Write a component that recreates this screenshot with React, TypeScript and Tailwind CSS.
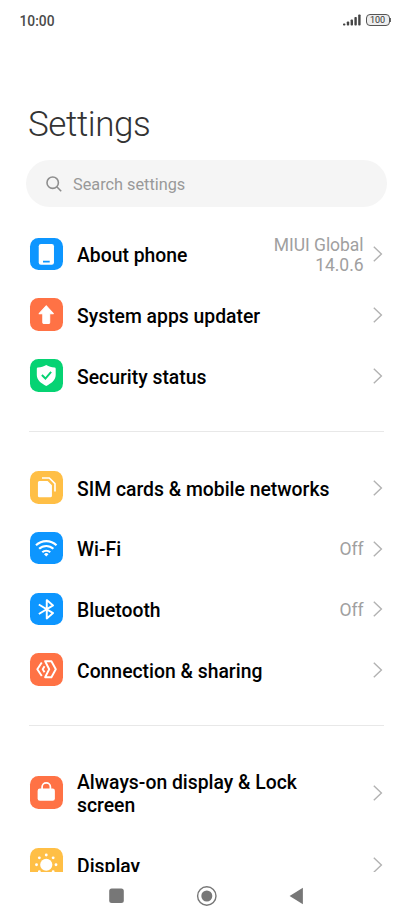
import type { ReactNode } from 'react';

interface SettingRowProps {
  icon: ReactNode;
  color: string;
  label: string;
  value?: string;
  tall?: boolean;
}

function Chevron() {
  return (
    <svg width="10" height="16" viewBox="0 0 10 16" fill="none" stroke="#b2b2b2" strokeWidth="1.4">
      <path d="M.8.8 8.4 8 .8 15.2" />
    </svg>
  );
}

function SettingRow({ icon, color, label, value, tall = false }: SettingRowProps) {
  return (
    <button
      type="button"
      className={`flex w-full items-center pr-[30.5px] pl-[30px] text-left ${tall ? 'h-[83px]' : 'h-[60.8px]'}`}
    >
      <span className={`h-[32.5px] w-[32.5px] shrink-0 overflow-hidden rounded-[8.5px] ${color}`}>
        <svg viewBox="0 0 32 32" className="h-full w-full" fill="none">
          {icon}
        </svg>
      </span>
      <span className="mt-[3.6px] ml-[14.5px] w-[260px] shrink-0 text-[19.35px] leading-[23px] font-medium text-black">
        {label}
      </span>
      <span className="mt-0.5 -ml-20 flex-1 text-right text-[17.5px] leading-[20px] tracking-[-0.05px] whitespace-pre-line text-[#a0a0a0]">
        {value}
      </span>
      <span className="mt-px ml-[9px] shrink-0">
        <Chevron />
      </span>
    </button>
  );
}

function Divider() {
  return <div className="mx-[29px] my-[25px] h-px bg-[#e8e8e8]" />;
}

const phoneIcon = (
  <>
    <rect x="8.6" y="6" width="15" height="20.3" rx="2.2" fill="#fff" />
    <path d="M12.8 23.3h6.6" stroke="#0d96ff" strokeWidth="1.7" />
  </>
);

const updateIcon = (
  <path
    d="M16 7.6 23 15.4H19.4V24.2a.9.9 0 0 1-.9.9H13.5a.9.9 0 0 1-.9-.9V15.4H9Z"
    fill="#fff"
    stroke="#fff"
    strokeLinejoin="round"
  />
);

const shieldIcon = (
  <>
    <path
      d="M16 5.8c2.6 1.5 5 2.3 8.2 2.5q1.1.1 1.1 1.2v6.3c0 4.8-4.3 8.4-9.3 10.7-5-2.3-9.3-5.9-9.3-10.7V9.5q0-1.1 1.1-1.2C11 8.1 13.4 7.3 16 5.8Z"
      fill="#fff"
    />
    <path d="m11.7 15.7 3.5 3.5 5.6-6.6" stroke="#06d373" strokeWidth="1.9" />
  </>
);

const simIcon = (
  <>
    <path
      d="M9.3 9.8H17.3L21.6 14.1v10.2a1.5 1.5 0 0 1-1.5 1.5H9.3a1.5 1.5 0 0 1-1.5-1.5V11.3a1.5 1.5 0 0 1 1.5-1.5Z"
      fill="#fff"
    />
    <path d="M11.8 6.9h7.2l5.6 5.6v7.8" stroke="#fff" strokeWidth="1.6" strokeLinejoin="round" />
  </>
);

const wifiIcon = (
  <>
    <g stroke="#fff" strokeWidth="2.1">
      <path d="M5.9 13.1a14.3 14.3 0 0 1 20.2 0" />
      <path d="M9 16.6a10 10 0 0 1 14 0" />
      <path d="M12.1 20a5.6 5.6 0 0 1 7.8 0" />
    </g>
    <path d="M13.8 21.9a3.1 3.1 0 0 1 4.4 0L16 24.2Z" fill="#fff" />
  </>
);

const bluetoothIcon = (
  <path
    d="m8.7 11.3 14 8.5-6.2 5.2V7l6.2 5.2-14 8.5"
    stroke="#fff"
    strokeWidth="1.9"
    strokeLinejoin="round"
  />
);

const sharingIcon = (
  <g stroke="#fff" strokeWidth="1.9" strokeLinejoin="round">
    <path d="M11.6 9.3 7.2 16l4.4 6.7" />
    <path d="m14.3 13-1.8 3 1.8 3" />
    <path d="M14.9 8.1h6.2L25.4 16l-4.3 7.9h-6.2l4-7.9Z" />
  </g>
);

const lockIcon = (
  <>
    <rect x="7.5" y="12.4" width="17" height="12" rx="2.2" fill="#fff" />
    <path d="M11.9 13v-2.2a4.1 4.1 0 0 1 8.2 0V13" stroke="#fff" strokeWidth="1.7" />
  </>
);

const sunIcon = (
  <g fill="#fff">
    <circle cx="16" cy="16.5" r="6" />
    <circle cx="16" cy="6.9" r="1.4" />
    <circle cx="9.2" cy="9.7" r="1.4" />
    <circle cx="22.8" cy="9.7" r="1.4" />
    <circle cx="6.4" cy="16.5" r="1.4" />
    <circle cx="25.6" cy="16.5" r="1.4" />
    <circle cx="9.2" cy="23.3" r="1.4" />
    <circle cx="22.8" cy="23.3" r="1.4" />
  </g>
);

function StatusBar() {
  return (
    <div className="flex h-[40px] shrink-0 items-center justify-between pr-[22px] pl-[19.5px]">
      <span className="mt-0.5 text-[13.8px] font-medium text-[#4a4a4a]">10:00</span>
      <div className="flex items-center gap-[5px]">
        <svg width="18" height="12" viewBox="0 0 18 12" fill="#444">
          <rect x="0" y="9.5" width="2.4" height="2" rx=".8" />
          <rect x="3.8" y="7.5" width="2.4" height="4" rx=".8" />
          <rect x="7.6" y="5.5" width="2.4" height="6" rx=".8" />
          <rect x="11.4" y="3" width="2.4" height="8.5" rx=".8" />
          <rect x="15.2" y=".5" width="2.4" height="11" rx=".8" />
        </svg>
        <div className="flex items-center">
          <div className="flex h-[12px] w-[24px] items-center justify-center rounded-[4px] border border-[#555] bg-[#eee] pt-[1.5px] text-[9px] leading-none text-[#333]">
            100
          </div>
          <div className="h-[4px] w-[1.5px] bg-[#666]" />
        </div>
      </div>
    </div>
  );
}

function NavigationBar() {
  return (
    <nav className="flex h-[48px] shrink-0 items-center justify-center gap-[68px] bg-white">
      <svg width="22" height="22" viewBox="0 0 22 22" fill="#777">
        <rect x="3.2" y="3.5" width="14.6" height="14.6" rx="2.5" />
      </svg>
      <svg width="22" height="22" viewBox="0 0 22 22" fill="none">
        <circle cx="10.8" cy="11" r="9.2" stroke="#777" strokeWidth="1.4" />
        <circle cx="10.8" cy="11" r="5.5" fill="#777" />
      </svg>
      <svg width="22" height="22" viewBox="0 0 22 22" fill="#777">
        <path d="M16.9 2.8v16.4L3.6 11Z" />
      </svg>
    </nav>
  );
}

export default function App() {
  return (
    <div className="flex h-[920px] w-[413px] flex-col overflow-hidden bg-white font-['Roboto',sans-serif]">
      <StatusBar />

      <main className="min-h-0 flex-1 overflow-hidden">
        <h1 className="mt-[64px] ml-[28px] text-[35px] leading-[42px] font-light tracking-[-0.4px] text-[#333]">
          Settings
        </h1>

        <div className="mt-[14px] ml-[26px] flex h-[47px] w-[361px] items-center rounded-full bg-[#f5f5f5] pl-[20px]">
          <svg width="16" height="16" viewBox="0 0 16 16" fill="none" stroke="#8e8e8e" strokeWidth="1.6">
            <circle cx="6.7" cy="6.7" r="5.7" />
            <path d="m10.8 10.8 4.4 4.4" />
          </svg>
          <span className="mt-[2px] ml-[11px] text-[16.3px] leading-[24px] text-[#999]">Search settings</span>
        </div>

        <div className="mt-[16.5px]">
          <SettingRow icon={phoneIcon} color="bg-[#0d96ff]" label="About phone" value={'MIUI Global\n14.0.6'} />
          <SettingRow icon={updateIcon} color="bg-[#ff7245]" label="System apps updater" />
          <SettingRow icon={shieldIcon} color="bg-[#06d373]" label="Security status" />
        </div>
        <Divider />
        <div>
          <SettingRow icon={simIcon} color="bg-[#ffbf46]" label="SIM cards & mobile networks" />
          <SettingRow icon={wifiIcon} color="bg-[#0d96ff]" label="Wi-Fi" value="Off" />
          <SettingRow icon={bluetoothIcon} color="bg-[#0d96ff]" label="Bluetooth" value="Off" />
          <SettingRow icon={sharingIcon} color="bg-[#ff7245]" label="Connection & sharing" />
        </div>
        <Divider />
        <div>
          <SettingRow icon={lockIcon} color="bg-[#ff7245]" label="Always-on display & Lock screen" tall />
          <SettingRow icon={sunIcon} color="bg-[#ffbf46]" label="Display" />
        </div>
      </main>

      <NavigationBar />
    </div>
  );
}
